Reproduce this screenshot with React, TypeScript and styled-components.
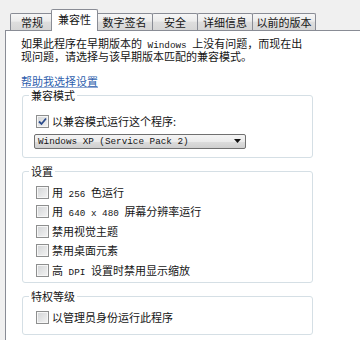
import * as React from 'react'
import styled, { createGlobalStyle } from 'styled-components'

const GlobalStyle = createGlobalStyle`
  body {
    margin: 0;
    background: #f0f0f0;
    font-family: "Noto Sans CJK SC", "Noto Sans", sans-serif;
    font-size: 11px;
    color: #151515;
  }
`

const Window = styled('div')`
  display: flex;
  flex-direction: column;
  width: 360px;
  height: 340px;
  padding: 9px 0 0 5px;
  box-sizing: border-box;
  overflow: hidden;
`

const TabStrip = styled('div')`
  display: flex;
  align-items: flex-end;
  height: 21px;
  padding-left: 5px;
`

const Tab = styled('div')<{ $active?: boolean; $width: number }>`
  position: relative;
  z-index: ${p => (p.$active ? 2 : 1)};
  box-sizing: border-box;
  width: ${p => p.$width}px;
  height: ${p => (p.$active ? 22 : 17)}px;
  margin: 0 ${p => (p.$active ? -2 : -1)}px ${p => (p.$active ? -1 : 0)}px
    ${p => (p.$active ? -2 : 0)}px;
  padding-top: ${p => (p.$active ? 3 : 2)}px;
  border: 1px solid #898c95;
  border-bottom: none;
  border-radius: 2px 2px 0 0;
  background: ${p =>
    p.$active ? '#fff' : 'linear-gradient(#f6f6f6, #ececec 45%, #dedede 50%, #d6d6d6)'};
  text-align: center;
  line-height: 13px;
  white-space: nowrap;
`

const Panel = styled('div')`
  flex: 1;
  display: flex;
  flex-direction: column;
  align-items: flex-start;
  padding: 6px 0 0 15px;
  background: #fff;
  border: 1px solid #898c95;
  border-right: none;
  border-bottom: none;
`

const Intro = styled('p')`
  margin: 0;
  line-height: 12px;
  white-space: nowrap;
`

const Mono = styled('span')`
  font-family: "Liberation Mono", "DejaVu Sans Mono", monospace;
  font-size: 9.3px;
  line-height: 1;
`

const HelpLink = styled('a')`
  margin-top: 13px;
  line-height: 12px;
  color: #2f5fae;
  text-decoration: underline;
  text-decoration-color: #8fa8d2;
  cursor: pointer;
`

const Group = styled('fieldset')<{ $top: number; $padTop: number; $padBottom: number }>`
  display: block;
  box-sizing: border-box;
  width: 291px;
  min-inline-size: 0;
  margin: ${p => p.$top}px 0 0 1px;
  padding: ${p => p.$padTop}px 0 ${p => p.$padBottom}px 6px;
  border: 1px solid #d5dfe5;
  border-radius: 3px;
`

const Legend = styled('legend')`
  padding: 0 2px;
  line-height: 13px;
`

const GroupBody = styled('div')`
  display: flex;
  flex-direction: column;
  align-items: flex-start;
  gap: 6.5px;
`

const Row = styled('label')`
  display: flex;
  align-items: center;
  gap: 3px;
  height: 13px;
  margin-left: 7px;
  line-height: 13px;
  white-space: nowrap;
`

const Box = styled('span')`
  box-sizing: border-box;
  display: flex;
  align-items: center;
  justify-content: center;
  width: 13px;
  height: 13px;
  border: 1px solid #8e8f8f;
  background: linear-gradient(135deg, #d2d4d6, #f4f4f4);
  box-shadow: inset 0 0 0 1px #f6f6f6;
`

const Combo = styled('div')`
  box-sizing: border-box;
  flex: none;
  display: flex;
  align-items: center;
  justify-content: space-between;
  width: 212px;
  height: 15px;
  margin: -0.5px 0 0 5px;
  padding: 0 4px 0 3px;
  border: 1px solid #707070;
  border-radius: 2px;
  background: linear-gradient(#f4f4f4, #ebebeb 50%, #dddddd 51%, #cfcfcf);
  line-height: 13px;
  white-space: nowrap;
`

function Check({ checked }: { checked?: boolean }) {
  return (
    <Box>
      {checked && (
        <svg width="9" height="9" viewBox="0 0 9 9">
          <path d="M1 4.5 L3.5 7 L8 1.5" fill="none" stroke="#2b4c8c" strokeWidth="1.8" />
        </svg>
      )}
    </Box>
  )
}

function Option({ checked, children }: { checked?: boolean; children: React.ReactNode }) {
  return (
    <Row>
      <Check checked={checked} />
      <span>{children}</span>
    </Row>
  )
}

const tabs = [
  { label: '常规', width: 44 },
  { label: '兼容性', width: 47, active: true },
  { label: '数字签名', width: 57 },
  { label: '安全', width: 46 },
  { label: '详细信息', width: 56 },
  { label: '以前的版本', width: 64 },
]

export default function App() {
  return (
    <Window>
      <GlobalStyle />
      <TabStrip>
        {tabs.map(t => (
          <Tab key={t.label} $active={t.active} $width={t.width}>
            {t.label}
          </Tab>
        ))}
      </TabStrip>
      <Panel>
        <Intro>
          如果此程序在早期版本的<Mono> Windows </Mono>上没有问题，而现在出
          <br />
          现问题，请选择与该早期版本匹配的兼容模式。
        </Intro>
        <HelpLink>帮助我选择设置</HelpLink>

        <Group $top={1.5} $padTop={13} $padBottom={8}>
          <Legend>兼容模式</Legend>
          <GroupBody>
            <Option checked>以兼容模式运行这个程序:</Option>
            <Combo>
              <Mono>Windows XP (Service Pack 2)</Mono>
              <svg width="7" height="4" viewBox="0 0 7 4">
                <path d="M0 0 H7 L3.5 4 Z" fill="#111" />
              </svg>
            </Combo>
          </GroupBody>
        </Group>

        <Group $top={7} $padTop={8} $padBottom={5}>
          <Legend>设置</Legend>
          <GroupBody>
            <Option>
              用<Mono> 256 </Mono>色运行
            </Option>
            <Option>
              用<Mono> 640 x 480 </Mono>屏幕分辨率运行
            </Option>
            <Option>禁用视觉主题</Option>
            <Option>禁用桌面元素</Option>
            <Option>
              高<Mono> DPI </Mono>设置时禁用显示缩放
            </Option>
          </GroupBody>
        </Group>

        <Group $top={7} $padTop={8} $padBottom={10}>
          <Legend>特权等级</Legend>
          <GroupBody>
            <Option>以管理员身份运行此程序</Option>
          </GroupBody>
        </Group>
      </Panel>
    </Window>
  )
}
